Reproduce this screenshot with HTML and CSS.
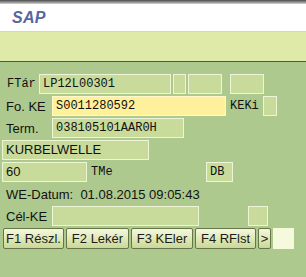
FILE: index.html
```html
<!DOCTYPE html>
<html lang="hu">
<head>
  <meta charset="UTF-8">
  <title>SAP</title>
  <link rel="stylesheet" href="styles.css">
</head>
<body>
  <div class="topbar"></div>
  <div class="header">
    <span class="logo">SAP</span>
  </div>
  <div class="toolbar"></div>

  <div class="screen">
    <div class="row">
      <span class="label mono w-ftar">FTár</span>
      <div class="field mono w131">LP12L00301</div>
      <div class="field w12 ml2"></div>
      <div class="field w33 ml2"></div>
      <div class="field w33 ml9"></div>
    </div>

    <div class="row">
      <span class="label w-lbl">Fo. KE</span>
      <div class="field mono focus w173">S0011280592</div>
      <span class="label mono">KEKi</span>
      <div class="field w13 ml4"></div>
    </div>

    <div class="row">
      <span class="label w-lbl">Term.</span>
      <div class="field mono w131">038105101AAR0H</div>
    </div>

    <div class="row">
      <div class="field w146">KURBELWELLE</div>
    </div>

    <div class="row">
      <div class="field w84">60</div>
      <span class="label mono ml4 w-tme">TMe</span>
      <div class="field mono w26">DB</div>
    </div>

    <div class="row">
      <span class="label date">WE-Datum:&nbsp; 01.08.2015 09:05:43</span>
    </div>

    <div class="row">
      <span class="label w-lbl">Cél-KE</span>
      <div class="field w146"></div>
      <div class="field w19 ml50"></div>
    </div>

    <div class="buttons">
      <button class="btn w60">F1 Részl.</button>
      <button class="btn w62">F2 Lekér</button>
      <button class="btn w61">F3 KEler</button>
      <button class="btn w60">F4 RFlst</button>
      <button class="btn more">&gt;</button>
      <div class="spare"></div>
    </div>
  </div>
</body>
</html>
```

FILE: styles.css
```css
body {
  margin: 0;
  background-color: #adc98e;
  font-family: "Liberation Sans", Arial, sans-serif;
  font-size: 13px;
  color: #111;
}

.topbar {
  height: 4px;
  background: linear-gradient(#4a4a4a, #9a9a9a 60%, #d8d8d8);
}

.header {
  height: 27px;
  background: #fff;
  border-bottom: 1px solid #d0d4d8;
  padding-left: 12px;
  display: flex;
  align-items: center;
}

.logo {
  font-weight: bold;
  font-style: italic;
  font-size: 16px;
  color: #56679e;
  letter-spacing: 0.3px;
}

.toolbar {
  height: 29px;
  background: #dfe9a8;
  border-bottom: 1px solid #4e5c36;
}

.screen {
  padding: 12px 0 0 2px;
}

.row {
  display: flex;
  align-items: center;
  height: 20px;
  margin-bottom: 2px;
}

.label {
  padding-left: 4px;
  white-space: nowrap;
}

.w-ftar { width: 32px; padding-left: 5px; }
.w-lbl { width: 46px; }
.w-tme { width: 115px; padding-left: 0; }

.mono {
  font-family: "Liberation Mono", "Courier New", monospace;
  font-size: 12px;
}

.field {
  box-sizing: border-box;
  height: 20px;
  background: #c8db9a;
  border: 1px solid #eef4d6;
  padding: 0 3px;
  line-height: 18px;
  white-space: nowrap;
  overflow: hidden;
}

.field.focus {
  background: #fff09b;
  border-color: #fff8cc;
}

.w12 { width: 13px; }
.w13 { width: 14px; }
.w19 { width: 20px; }
.w26 { width: 27px; }
.w33 { width: 34px; }
.w84 { width: 85px; }
.w131 { width: 132px; }
.w146 { width: 147px; }
.w173 { width: 174px; }

.ml2 { margin-left: 2px; }
.ml4 { margin-left: 4px; }
.ml9 { margin-left: 8px; }
.ml50 { margin-left: 49px; }

.date {
  padding-left: 4px;
}

.buttons {
  display: flex;
  gap: 2px;
  margin-top: 2px;
  padding-left: 1px;
}

.btn {
  box-sizing: border-box;
  height: 21px;
  padding: 0;
  border: 1px solid #66764a;
  border-radius: 2px;
  background: linear-gradient(#f4f8dc, #dbe6b0 60%, #c9d899);
  font-family: "Liberation Sans", Arial, sans-serif;
  font-size: 13px;
  color: #1c1c1c;
}

.w60 { width: 61px; }
.w61 { width: 62px; }
.w62 { width: 63px; }

.btn.more {
  width: 13px;
}

.spare {
  width: 21px;
  height: 21px;
  background: #f6fadc;
}
```
